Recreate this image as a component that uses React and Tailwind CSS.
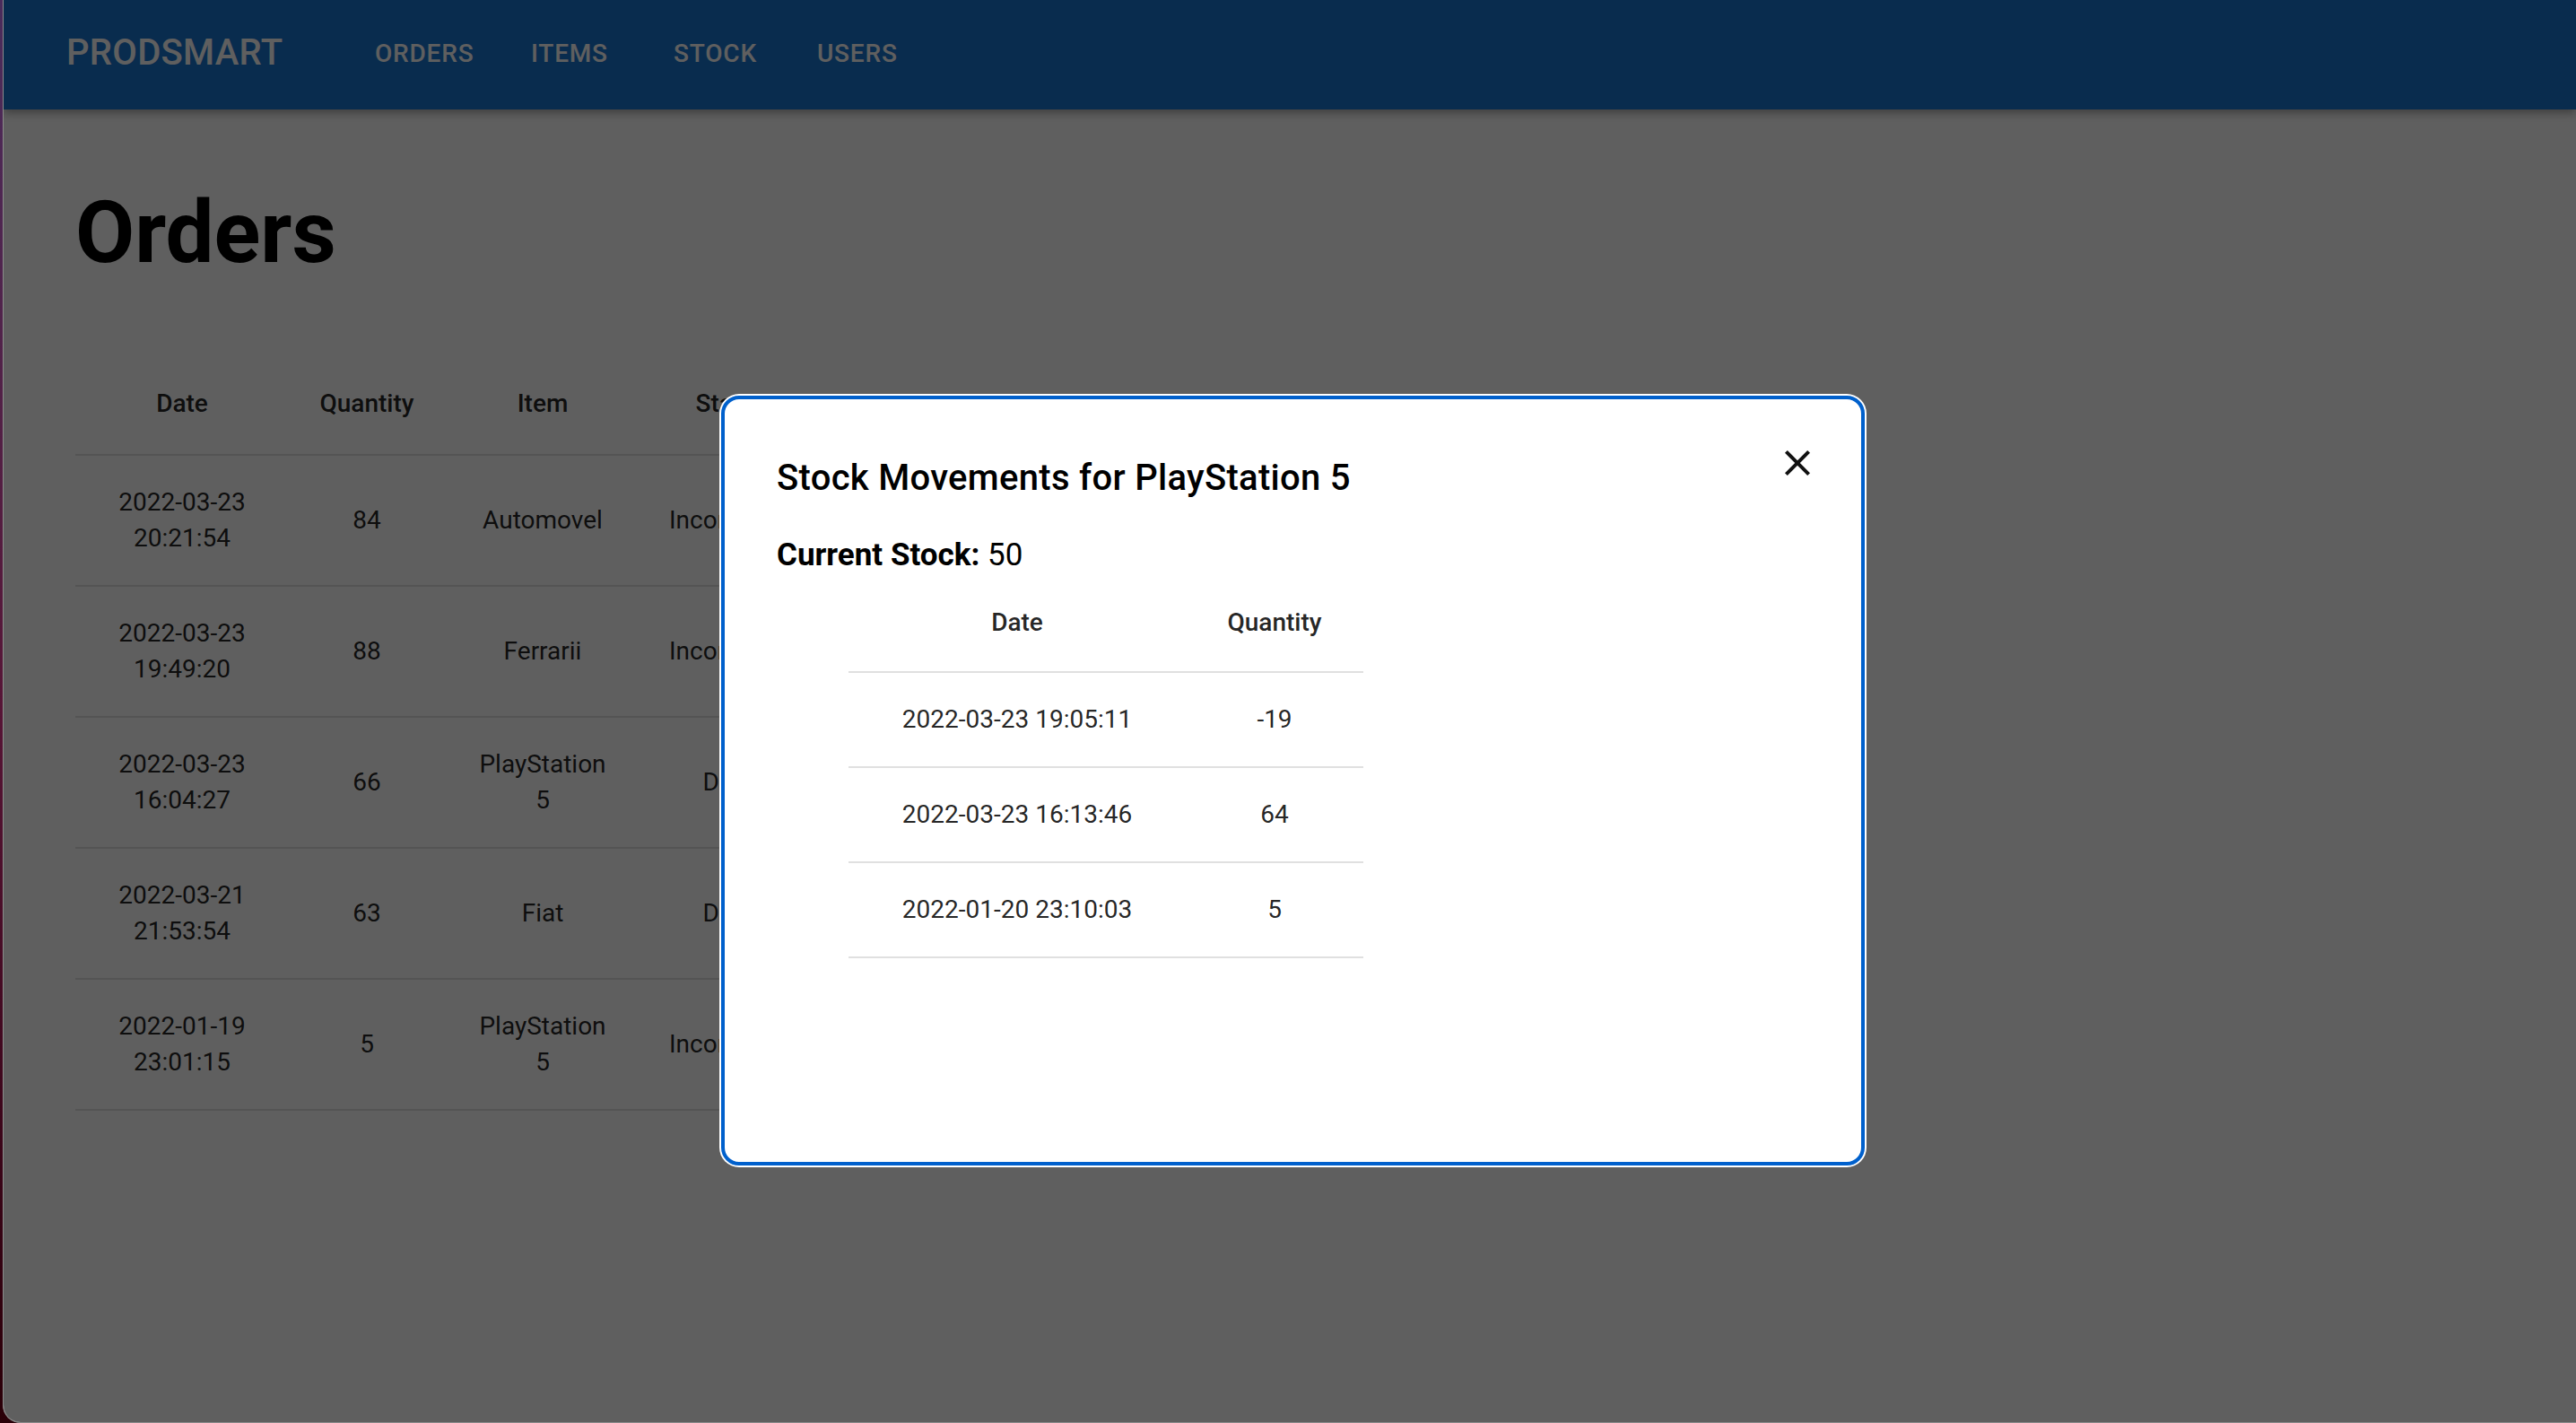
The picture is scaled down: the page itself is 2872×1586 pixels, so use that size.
import React from "react";

const navItems = [
  { label: "Orders", width: "w-[174px]" },
  { label: "Items", width: "w-[159px]" },
  { label: "Stock", width: "w-[160px]" },
  { label: "Users", width: "w-[160px]" },
];

const orders = [
  { date: "2022-03-23 20:21:54", quantity: 84, item: "Automovel", status: "Incomplete" },
  { date: "2022-03-23 19:49:20", quantity: 88, item: "Ferrarii", status: "Incomplete" },
  { date: "2022-03-23 16:04:27", quantity: 66, item: "PlayStation 5", status: "Done" },
  { date: "2022-03-21 21:53:54", quantity: 63, item: "Fiat", status: "Done" },
  { date: "2022-01-19 23:01:15", quantity: 5, item: "PlayStation 5", status: "Incomplete" },
];

const movements = [
  { date: "2022-03-23 19:05:11", quantity: -19 },
  { date: "2022-03-23 16:13:46", quantity: 64 },
  { date: "2022-01-20 23:10:03", quantity: 5 },
];

const CloseIcon = () => (
  <svg width="48" height="48" viewBox="0 0 24 24" fill="#111">
    <path d="M19 6.41 17.59 5 12 10.59 6.41 5 5 6.41 10.59 12 5 17.59 6.41 19 12 13.41 17.59 19 19 17.59 13.41 12z" />
  </svg>
);

const App = () => {
  return (
    <div className="h-screen w-full flex bg-gradient-to-b from-[#4a2c5c] via-[#561536] to-[#2a0008] font-['Roboto','Liberation_Sans',sans-serif]">
      <div className="relative flex-1 ml-[3px] border-l border-b border-[#8a8a8a] rounded-bl-[20px] overflow-hidden bg-white">
        {/* App bar */}
        <header className="h-[122px] bg-[#1976d2] flex items-center pb-[4px] pl-[70px] shadow-[0_4px_10px_rgba(0,0,0,0.35)] relative z-[1]">
          <div className="w-[344px] text-[40px] font-medium tracking-[0.3px] text-white">PRODSMART</div>
          <nav className="flex items-center">
            {navItems.map((item) => (
              <div key={item.label} className={`${item.width} text-[28px] font-medium uppercase tracking-[0.8px] text-white pt-[2px]`}>
                {item.label}
              </div>
            ))}
          </nav>
        </header>

        <main className="pl-[80px]">
          <h1 className="mt-[81px] text-[96px] leading-[112px] font-bold text-black">Orders</h1>

          <table className="mt-[83px] table-fixed border-collapse text-[rgba(0,0,0,0.87)]">
            <colgroup>
              <col className="w-[238px]" />
              <col className="w-[174px]" />
              <col className="w-[218px]" />
              <col className="w-[202px]" />
              <col className="w-[260px]" />
              <col className="w-[300px]" />
            </colgroup>
            <thead>
              <tr className="border-b-2 border-[#e0e0e0]">
                {["Date", "Quantity", "Item", "Status", "User", "Actions"].map((h) => (
                  <th key={h} className="px-[32px] pt-[32px] pb-[36px] text-[28px] leading-[40px] font-medium text-center">
                    {h}
                  </th>
                ))}
              </tr>
            </thead>
            <tbody>
              {orders.map((o, i) => (
                <tr key={i} className="border-b-2 border-[#e0e0e0]">
                  <td className="px-[32px] py-[32px] text-[28px] leading-[40px] text-center">{o.date}</td>
                  <td className="px-[32px] py-[32px] text-[28px] leading-[40px] text-center">{o.quantity}</td>
                  <td className="px-[32px] py-[32px] text-[28px] leading-[40px] text-center">{o.item}</td>
                  <td className="px-[32px] py-[32px] text-[28px] leading-[40px] text-center">{o.status}</td>
                  <td className="px-[32px] py-[32px]" />
                  <td className="px-[32px] py-[32px]" />
                </tr>
              ))}
            </tbody>
          </table>
        </main>

        {/* Backdrop */}
        <div className="absolute inset-0 bg-[rgba(0,0,0,0.627)] z-[2]" />

        {/* Modal */}
        <div className="absolute left-[800px] top-[441px] w-[1275px] h-[858px] z-[3] bg-white border-4 border-[#0060cc] rounded-[20px] shadow-[0_0_0_2px_white] px-[56px] pt-[56px] text-[rgba(0,0,0,0.87)]">
          <button type="button" className="absolute top-[47px] right-[47px] w-[48px] h-[48px] flex items-center justify-center">
            <CloseIcon />
          </button>

          <h2 className="pl-[2px] text-[40px] leading-[64px] font-medium tracking-[0.3px] text-black">
            Stock Movements for PlayStation 5
          </h2>

          <p className="mt-[31px] pl-[2px] text-[35px] leading-[46px] text-black">
            <span className="font-bold">Current Stock:</span> 50
          </p>

          <table className="ml-[82px] table-fixed border-collapse">
            <colgroup>
              <col className="w-[376px]" />
              <col className="w-[198px]" />
            </colgroup>
            <thead>
              <tr className="border-b-2 border-[#e0e0e0]">
                <th className="pt-[32px] pb-[34px] text-[28px] leading-[40px] font-medium text-center">Date</th>
                <th className="pt-[32px] pb-[34px] text-[28px] leading-[40px] font-medium text-center">Quantity</th>
              </tr>
            </thead>
            <tbody>
              {movements.map((m) => (
                <tr key={m.date} className="border-b-2 border-[#e0e0e0]">
                  <td className="py-[32px] text-[28px] leading-[40px] text-center">{m.date}</td>
                  <td className="py-[32px] text-[28px] leading-[40px] text-center">{m.quantity}</td>
                </tr>
              ))}
            </tbody>
          </table>
        </div>
      </div>
    </div>
  );
};

export default App;
